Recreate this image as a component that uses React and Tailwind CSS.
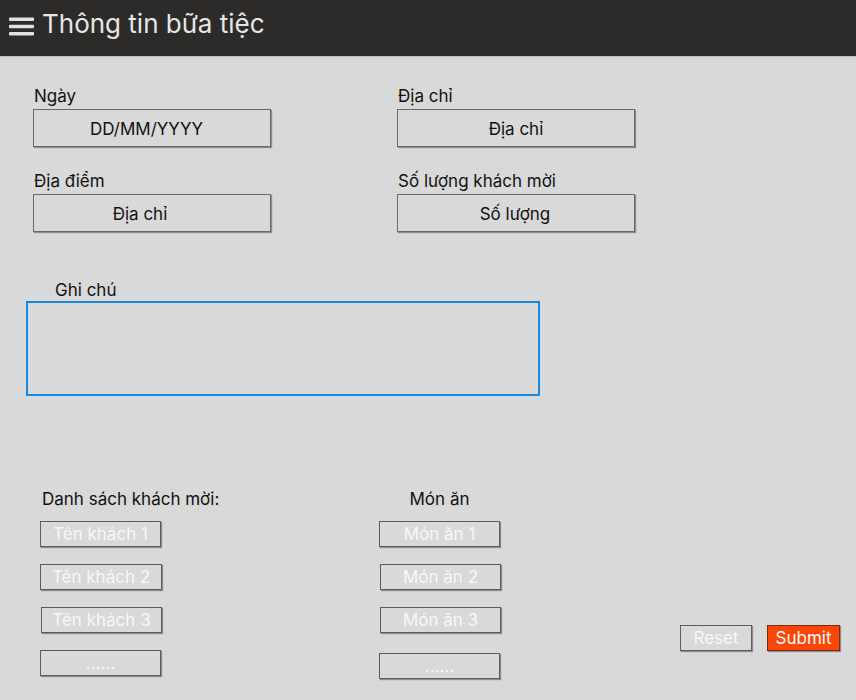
import React from "react";

const font = { fontFamily: "Inter, 'Noto Sans', sans-serif" };

function Field({ label, value, shift = "" }) {
  return (
    <div className="flex flex-col w-[238px]">
      <div className="h-[25px] leading-[24px] text-[17px] text-[#111] pl-px">{label}</div>
      <div
        className={
          "h-[38px] pt-[3px] border border-[#6a6a6a] shadow-[1px_1px_1px_rgba(0,0,0,0.35)] flex items-center justify-center text-[17px] text-[#111] " +
          shift
        }
      >
        {value}
      </div>
    </div>
  );
}

function SmallBox({ text, className = "" }) {
  return (
    <div
      className={
        "w-[121px] h-[26px] pt-[2px] border border-[#5c5c5c] shadow-[1px_1px_1px_rgba(0,0,0,0.35)] flex items-center justify-center text-[17px] text-[#f7f7f7] " +
        className
      }
    >
      {text}
    </div>
  );
}

export default function App() {
  return (
    <div style={font} className="w-[856px] h-[700px] bg-[#d9d9d9] overflow-hidden">
      <header className="h-[57px] bg-[#2c2b29] flex items-center pl-[9px] border-b border-[#bdbdbd]">
        <svg width="25" height="19" viewBox="0 0 25 19" className="mb-[3px]">
          <rect x="0" y="0.5" width="25" height="3.6" rx="1" fill="#e2e2e2" />
          <rect x="0" y="7.7" width="25" height="3.6" rx="1" fill="#e2e2e2" />
          <rect x="0" y="14.9" width="25" height="3.6" rx="1" fill="#e2e2e2" />
        </svg>
        <h1 className="ml-[8px] text-[26px] leading-none text-[#e6e6e6] mb-[8px]">Thông tin bữa tiệc</h1>
      </header>

      <div className="pl-[33px] pt-[27px] flex gap-[126px]">
        <div className="flex flex-col gap-[22px]">
          <Field label="Ngày" value="DD/MM/YYYY" shift="pr-[11px]" />
          <Field label="Địa điểm" value="Địa chỉ" shift="pr-[24px]" />
        </div>
        <div className="flex flex-col gap-[22px]">
          <Field label="Địa chỉ" value="Địa chỉ" />
          <Field label="Số lượng khách mời" value="Số lượng" shift="pr-[2px]" />
        </div>
      </div>

      <div className="pl-[26px] pt-[46px]">
        <div className="pl-[29px] h-[23px] leading-[24px] text-[17px] text-[#111]">Ghi chú</div>
        <div className="w-[514px] h-[95px] border-2 border-[#1787e0]"></div>
      </div>

      <div className="flex pt-[91px]">
        <div className="pl-[40px] w-[379px] flex flex-col">
          <div className="pl-[2px] h-[34px] leading-[24px] text-[17px] text-[#111] whitespace-nowrap">Danh sách khách mời:</div>
          <div className="flex flex-col gap-[17px]">
            <SmallBox text="Tên khách 1" />
            <SmallBox text="Tên khách 2" className="w-[122px]" />
            <SmallBox text="Tên khách 3" className="ml-px" />
            <SmallBox text="......" />
          </div>
        </div>
        <div className="flex flex-col">
          <div className="h-[34px] leading-[24px] text-[17px] text-[#111] text-center w-[121px]">Món ăn</div>
          <div className="flex flex-col gap-[17px]">
            <SmallBox text="Món ăn 1" />
            <SmallBox text="Món ăn 2" className="ml-px" />
            <SmallBox text="Món ăn 3" className="ml-px" />
            <SmallBox text="......" className="mt-[3px]" />
          </div>
        </div>
        <div className="ml-auto mr-[16px] mt-[138px] flex gap-[15px] h-[26px]">
          <div className="w-[72px] h-[26px] pt-[2px] border border-[#5c5c5c] shadow-[1px_1px_1px_rgba(0,0,0,0.35)] flex items-center justify-center text-[17px] text-[#f7f7f7]">
            Reset
          </div>
          <div className="w-[73px] h-[26px] pt-[2px] bg-[#fc4608] border border-[#7a2a10] shadow-[1px_1px_1px_rgba(0,0,0,0.35)] flex items-center justify-center text-[17px] text-white">
            Submit
          </div>
        </div>
      </div>
    </div>
  );
}
